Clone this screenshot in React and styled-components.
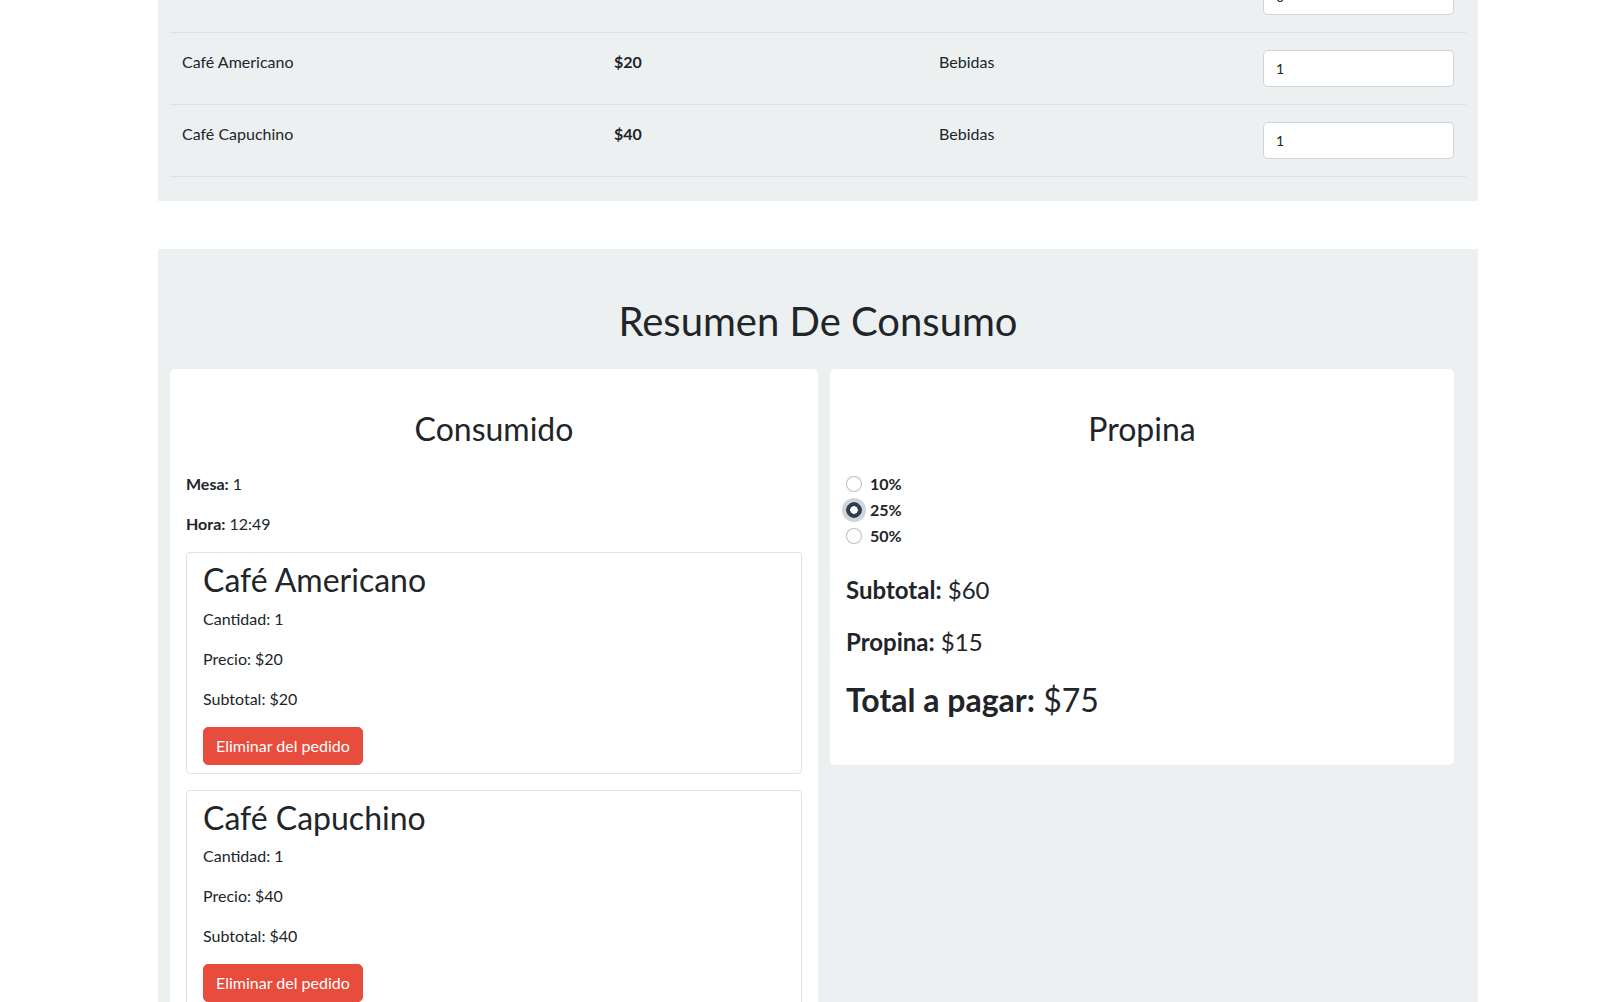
import styled, { createGlobalStyle } from 'styled-components';

const GlobalStyle = createGlobalStyle`
  body {
    margin: 0;
    background: #fff;
    color: #212529;
    font-family: Lato, "Open Sans", "Liberation Sans", sans-serif;
    font-size: 16px;
    line-height: 1.5;
  }
  * { box-sizing: border-box; }
`

const Page = styled.div`
  width: 1320px;
  margin-left: 158px;
`

const ProductsSection = styled.section`
  background: #ecf0f1;
  margin-top: -39px;
  padding: 0 12px 24px;
`

const ProductsTable = styled.table`
  width: 100%;
  border-collapse: collapse;
  table-layout: fixed;
`

const Cell = styled.td`
  padding: 17px 12px 17px;
  vertical-align: top;
  border-bottom: 1px solid #dde1e5;
  font-weight: ${(p) => (p.$bold ? 700 : 400)};
`

const QtyInput = styled.input`
  display: block;
  width: 100%;
  height: 37px;
  padding: 0 12px;
  border: 1px solid #ced4da;
  border-radius: 5px;
  background: #fff;
  color: #212529;
  font-family: Lato, "Liberation Sans", sans-serif;
  font-size: 14px;
  outline: none;
`

const SummarySection = styled.section`
  background: #ecf0f1;
  margin-top: 48px;
  padding: 48px 12px 48px;
`

const PageTitle = styled.h1`
  margin: 0 0 24px;
  font-size: 40px;
  font-weight: 400;
  line-height: 1.2;
  text-align: center;
`

const Columns = styled.div`
  display: grid;
  grid-template-columns: 648px 624px;
  column-gap: 12px;
  align-items: start;
`

const Card = styled.div`
  background: #fff;
  border-radius: 5px;
  padding: 17px 16px 16px;
`

const CardTitle = styled.h2`
  margin: 24px 0 24px;
  font-size: 32px;
  font-weight: 400;
  line-height: 1.2;
  text-align: center;
`

const Line = styled.p`
  margin: 0 0 16px;
`

const ItemCard = styled.div`
  border: 1px solid #dee2e6;
  border-radius: 4px;
  padding: 8px 16px 8px;
  margin-bottom: 16px;
`

const ItemName = styled.h2`
  margin: 0 0 7px;
  font-size: 32px;
  font-weight: 400;
  line-height: 1.2;
`

const DangerButton = styled.button`
  display: inline-block;
  padding: 6px 12px;
  border: 1px solid #e74c3c;
  border-radius: 5px;
  background: #e74c3c;
  color: #fff;
  font-family: Lato, "Liberation Sans", sans-serif;
  font-size: 16px;
  line-height: 1.5;
  cursor: pointer;
`

const TipOptions = styled.div`
  margin-bottom: 24px;
`

const TipOption = styled.label`
  display: flex;
  align-items: flex-start;
  min-height: 24px;
  margin-bottom: 2px;
  font-weight: 700;
  cursor: pointer;
`

const Radio = styled.input`
  appearance: none;
  flex: none;
  width: 16px;
  height: 16px;
  margin: 4px 8px 0 0;
  border: 1px solid rgba(0, 0, 0, 0.25);
  border-radius: 50%;
  background: #fff;
  &:checked {
    border-color: #2c3e50;
    background: radial-gradient(circle, #fff 0 3.5px, #2c3e50 4px);
    box-shadow: 0 0 0 4px rgba(44, 62, 80, 0.22);
  }
`

const Amount = styled.p`
  margin: 0 0 ${(p) => (p.$big ? '25px' : '16px')};
  font-size: ${(p) => (p.$big ? '32px' : '24px')};
  line-height: 1.5;
`

const products = [
  { name: '', price: null, category: '', qty: 0 },
  { name: 'Café Americano', price: 20, category: 'Bebidas', qty: 1 },
  { name: 'Café Capuchino', price: 40, category: 'Bebidas', qty: 1 },
]

const order = products.filter((p) => p.qty > 0)

export default function App() {
  const subtotal = order.reduce((s, p) => s + p.price * p.qty, 0)
  const tip = 25
  const tipAmount = Math.round((subtotal * tip) / 100)

  return (
    <>
      <GlobalStyle />
      <Page>
        <ProductsSection>
          <ProductsTable>
            <colgroup>
              <col style={{ width: 432 }} />
              <col style={{ width: 325 }} />
              <col style={{ width: 324 }} />
              <col />
            </colgroup>
            <tbody>
              {products.map((p, i) => (
                <tr key={i}>
                  <Cell>{p.name}</Cell>
                  <Cell $bold>{p.price != null && `$${p.price}`}</Cell>
                  <Cell>{p.category}</Cell>
                  <Cell>
                    <QtyInput type="number" defaultValue={p.qty} />
                  </Cell>
                </tr>
              ))}
            </tbody>
          </ProductsTable>
        </ProductsSection>

        <SummarySection>
          <PageTitle>Resumen De Consumo</PageTitle>
          <Columns>
            <Card>
              <CardTitle>Consumido</CardTitle>
              <Line><b>Mesa:</b> 1</Line>
              <Line><b>Hora:</b> 12:49</Line>
              {order.map((p) => (
                <ItemCard key={p.name}>
                  <ItemName>{p.name}</ItemName>
                  <Line>Cantidad: {p.qty}</Line>
                  <Line>Precio: ${p.price}</Line>
                  <Line>Subtotal: ${p.price * p.qty}</Line>
                  <DangerButton type="button">Eliminar del pedido</DangerButton>
                </ItemCard>
              ))}
            </Card>

            <Card>
              <CardTitle>Propina</CardTitle>
              <TipOptions>
                {[10, 25, 50].map((v) => (
                  <TipOption key={v}>
                    <Radio type="radio" name="propina" defaultChecked={v === tip} />
                    {v}%
                  </TipOption>
                ))}
              </TipOptions>
              <Amount><b>Subtotal:</b> ${subtotal}</Amount>
              <Amount><b>Propina:</b> ${tipAmount}</Amount>
              <Amount $big><b>Total a pagar:</b> ${subtotal + tipAmount}</Amount>
            </Card>
          </Columns>
        </SummarySection>
      </Page>
    </>
  )
}
